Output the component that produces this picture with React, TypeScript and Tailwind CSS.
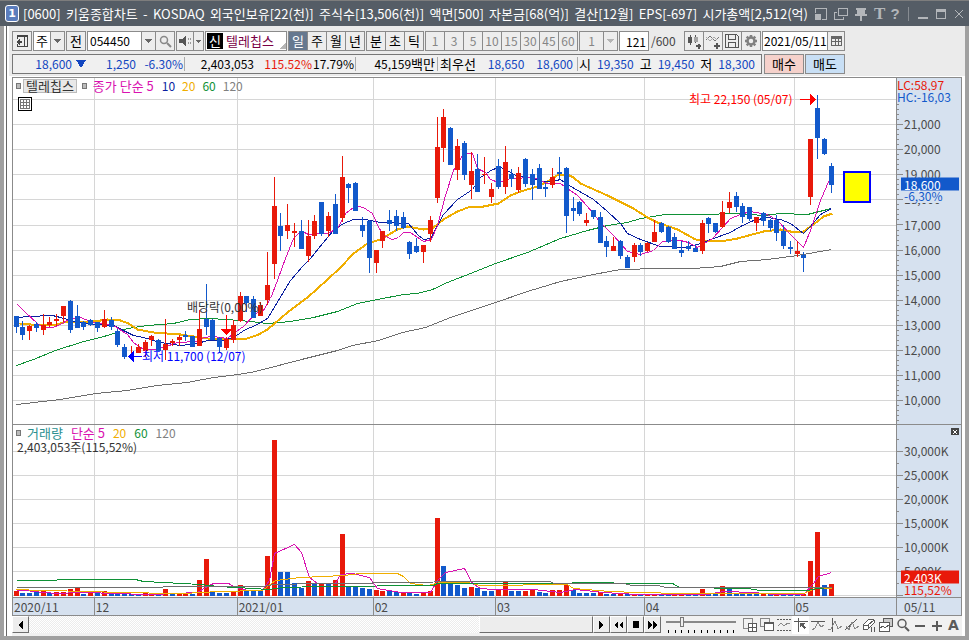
import type { ReactNode } from 'react';

// [high, bodyTop, bodyBottom, low, isUp] in chart rows
const candles: number[][] = [
  [238, 238, 249, 255, 0], [243, 249, 257, 262, 0], [247, 248, 253, 262, 1], [244, 246, 250, 254, 0],
  [236, 247, 252, 257, 1], [239, 244, 247, 249, 1], [236, 241, 243, 248, 1], [228, 228, 238, 244, 1],
  [222, 223, 252, 255, 0], [227, 238, 250, 250, 0], [243, 244, 249, 252, 0], [241, 242, 247, 248, 0],
  [244, 244, 250, 254, 0], [232, 241, 249, 250, 1], [239, 242, 249, 252, 0], [251, 253, 267, 269, 0],
  [266, 269, 279, 281, 0], [268, 277, 278, 282, 1], [266, 269, 275, 275, 1], [262, 264, 273, 279, 1],
  [257, 258, 262, 268, 1], [261, 262, 273, 273, 0], [241, 266, 272, 282, 1], [261, 263, 265, 268, 1],
  [257, 259, 262, 268, 1], [253, 257, 259, 263, 0], [258, 258, 269, 269, 0], [232, 251, 268, 268, 1],
  [206, 241, 249, 257, 0], [241, 242, 262, 262, 0], [259, 260, 269, 274, 0], [259, 261, 270, 272, 1],
  [242, 247, 262, 265, 1], [214, 218, 243, 244, 1], [218, 218, 225, 234, 0], [218, 221, 240, 240, 0],
  [224, 227, 238, 238, 1], [174, 207, 222, 227, 1], [99, 128, 186, 201, 1], [135, 148, 158, 173, 0],
  [126, 147, 153, 161, 1], [145, 153, 155, 169, 1], [142, 153, 171, 171, 0], [142, 158, 178, 184, 1],
  [137, 143, 158, 161, 1], [124, 124, 156, 158, 0], [134, 138, 153, 159, 1], [116, 126, 156, 156, 0],
  [78, 99, 140, 144, 1], [105, 106, 110, 125, 0], [104, 105, 133, 133, 0], [139, 147, 153, 159, 0],
  [142, 143, 180, 195, 0], [172, 172, 185, 195, 1], [153, 153, 163, 170, 1], [132, 142, 146, 153, 0],
  [132, 138, 148, 153, 0], [134, 139, 150, 151, 0], [163, 164, 176, 181, 0], [160, 168, 174, 175, 0],
  [167, 167, 174, 185, 1], [138, 142, 156, 164, 1], [39, 69, 120, 125, 1], [31, 39, 70, 84, 1],
  [49, 50, 87, 87, 0], [61, 68, 92, 102, 1], [63, 65, 97, 102, 0], [74, 93, 107, 121, 1],
  [76, 91, 114, 114, 0], [79, 96, 97, 106, 1], [105, 111, 119, 125, 1], [81, 88, 109, 111, 0],
  [68, 84, 109, 116, 1], [91, 96, 101, 109, 0], [89, 95, 112, 115, 1], [80, 81, 106, 109, 0],
  [91, 96, 107, 122, 0], [86, 90, 111, 111, 0], [105, 109, 111, 119, 0], [90, 99, 107, 110, 1],
  [79, 94, 96, 101, 0], [89, 90, 138, 155, 0], [119, 130, 133, 143, 0], [123, 124, 136, 138, 0],
  [135, 142, 145, 148, 1], [132, 132, 139, 141, 0], [134, 139, 165, 165, 0], [158, 163, 169, 179, 0],
  [159, 168, 173, 173, 1], [162, 163, 178, 181, 0], [177, 179, 190, 190, 0], [165, 167, 179, 184, 1],
  [165, 167, 174, 178, 0], [164, 165, 173, 174, 1], [142, 154, 164, 164, 1], [144, 145, 154, 155, 0],
  [148, 149, 164, 165, 0], [155, 159, 171, 171, 0], [163, 172, 175, 179, 0], [163, 168, 171, 173, 0],
  [166, 170, 174, 174, 0], [142, 145, 173, 176, 1], [139, 140, 146, 155, 0], [145, 145, 154, 155, 0],
  [123, 134, 149, 150, 1], [114, 124, 130, 135, 1], [114, 118, 129, 134, 0], [125, 128, 139, 145, 0],
  [129, 129, 141, 143, 0], [139, 139, 145, 153, 1], [134, 135, 143, 148, 0], [141, 142, 150, 153, 0],
  [137, 142, 155, 163, 0], [147, 153, 168, 171, 0], [163, 169, 171, 176, 0], [163, 173, 176, 179, 1],
  [174, 177, 180, 194, 0], [61, 61, 119, 127, 1], [17, 30, 60, 81, 0], [60, 61, 76, 77, 0],
  [85, 88, 107, 115, 0],
];

// bar heights, negative = volume down from the day before
const volumes = [
  5, -3, -3, -4, 5, -3, 4, 4, 7, 8, -2, 3, -3, 5, -3, -3, -2, -2, -2, 3, 2, -2, 7, -2, 2, 2, -2, 16, 37, -4,
  -3, -3, 4, 11, -5, -5, -5, 40, 156, -24, -24, -13, -8, 15, -13, 12, -12, 16, 62, -10, -9, -8, -7, 6, 5, -5,
  -4, 4, -4, -2, 3, 5, 78, -30, -12, -11, -8, 9, -8, -5, -5, 6, 14, -5, -5, 5, 6, -4, -3, 6, 6, 11, -6, -3,
  -3, -3, 4, -2, -2, 2, -2, 2, -1, 2, 2, -2, -2, 2, 2, -1, -2, 7, -2, -2, 10, -7, -2, -2, -2, -2, 2, -2, 2,
  -2, -2, -1, 2, 35, 64, -11, 12,
];

const priceLines = [
  { color: '#6e6e6e', width: 1, points: '3,326 47,321 82,315 114,312 144,307 174,304 200,299 225,296 242,293 292,280 324,272 339,267 365,262 389,254 412,249 437,239 482,224 514,213 547,203 580,196 607,191 647,190 680,190 707,188 727,183 754,181 784,177 818,171' },
  { color: '#0f9136', width: 1, points: '3,287 20,281 42,272 67,264 94,257 114,250 134,247 160,245 177,241 195,240 214,241 237,243 254,245 277,243 300,239 324,233 344,225 364,221 390,216 404,215 419,211 434,204 457,195 482,185 514,174 547,160 574,152 594,147 614,144 627,140 652,136 687,136 724,135 750,137 767,135 794,136 818,130' },
  { color: '#f0ae00', width: 2, points: '6,245 17,246 40,247 54,243 80,243 94,241 107,242 115,245 124,251 140,254 167,256 194,260 214,261 234,260 245,256 254,251 274,234 294,219 314,201 327,189 340,175 354,165 367,161 384,151 394,148 410,151 420,149 430,141 444,133 457,128 470,128 485,125 497,117 507,113 524,108 534,103 545,96 554,96 560,99 567,105 594,117 620,130 634,139 644,144 664,151 682,161 690,162 707,163 724,160 750,153 767,151 777,153 790,153 804,143 810,138 819,135' },
  { color: '#0a1fa0', width: 1, points: '4,239 15,238 39,237 47,239 64,244 80,246 100,247 114,254 120,257 130,259 147,264 167,267 184,265 194,262 210,262 220,259 232,251 242,247 254,240 265,222 277,202 289,188 297,180 309,165 320,152 330,145 340,141 352,141 367,144 395,145 404,156 410,161 417,160 425,145 430,136 444,121 459,111 467,99 479,91 487,89 494,92 504,98 517,99 527,103 539,103 547,101 554,106 580,121 594,133 607,145 614,155 627,161 647,168 670,169 684,166 700,160 717,154 727,148 740,142 754,139 767,141 777,145 790,155 797,148 807,136 818,130' },
  { color: '#d912b0', width: 1, points: '4,226 12,234 24,245 30,249 39,249 47,246 57,240 67,239 80,244 100,247 114,256 120,264 130,271 140,271 150,269 164,264 184,263 190,259 200,258 214,260 220,255 230,248 242,235 250,232 257,220 264,202 272,180 280,160 285,155 289,153 295,156 305,155 314,155 324,150 332,135 340,129 345,128 350,129 359,135 365,149 372,158 379,161 385,159 390,154 397,154 410,163 418,161 424,147 428,132 432,117 440,92 450,75 459,75 464,90 472,94 477,101 485,104 497,100 520,99 534,105 547,105 554,110 564,117 574,128 587,144 600,157 614,173 627,176 640,172 649,163 667,162 675,164 684,169 699,160 710,148 717,140 727,136 737,133 754,136 764,142 777,156 790,169 797,152 807,122 816,101' },
];

const volumeLines = [
  { color: '#d912b0', points: '3,165 12,165 20,166 30,167 45,168 65,167 80,167 95,168 140,169 184,167 194,161 200,158 215,158 222,162 235,165 249,165 256,155 261,128 270,124 281,119 288,127 296,152 304,158 322,158 327,149 339,148 356,152 364,163 387,167 417,167 424,155 432,147 451,143 459,158 467,163 480,164 520,164 547,167 562,164 590,167 624,169 694,169 710,166 740,167 760,169 790,169 800,158 805,151 818,147' },
  { color: '#f0ae00', points: '3,164 27,165 80,166 100,167 170,168 205,166 249,165 262,155 287,152 310,151 330,150 347,148 384,148 390,151 397,158 414,160 427,157 454,157 467,160 554,159 560,163 597,166 624,167 670,168 790,168 802,163 818,163' },
  { color: '#0f9136', points: '3,155 40,155 47,154 122,154 130,156 150,157 187,159 205,161 240,163 255,164 270,162 307,161 420,160 424,158 540,158 577,157 597,157 604,158 659,158 666,162 734,163 747,165 794,165 804,163 818,162' },
  { color: '#6e6e6e', points: '3,162 149,162 150,161 250,161 260,159 307,158 358,158 360,157 482,156 537,156 540,158 610,158 619,160 645,160 652,162 818,162' },
];

const PLOT_W = 883;
const PRICE_H = 346;
const VOLUME_H = 172;
const UP = '#e8190a';
const DOWN = '#1259cb';

const monthLines = [81, 224, 360, 482, 631, 781];
const priceRows = Array.from({ length: 13 }, (_, k) => 21 + Math.round(k * 25.1));
const volumeRows = [26, 50, 74, 98, 122, 146, 170];
const candleX = (i: number) => 3 + Math.floor(i * 6.793);
const pct = (value: number, total: number) => `${(value / total) * 100}%`;

const months = [
  { label: '2020/11', grow: 'grow-[81]' },
  { label: '12', grow: 'grow-[143]' },
  { label: '2021/01', grow: 'grow-[136]' },
  { label: '02', grow: 'grow-[122]' },
  { label: '03', grow: 'grow-[149]' },
  { label: '04', grow: 'grow-[150]' },
  { label: '05', grow: 'grow-[102]' },
];

const titleParts = [
  '[0600]', '키움종합차트', '-', 'KOSDAQ', '외국인보유[22(천)]', '주식수[13,506(천)]', '액면[500]',
  '자본금[68(억)]', '결산[12월]', 'EPS[-697]', '시가총액[2,512(억)',
];

const btn = 'flex h-5 shrink-0 items-center justify-center border border-[#8b8b8b] bg-[#ededed]';
const group = 'flex h-5 shrink-0 divide-x divide-[#8b8b8b] border border-[#8b8b8b] bg-[#ededed]';
const cell = 'flex h-full flex-1 items-center justify-center';

function Icon({ w = 14, h = 14, className = '', children }: { w?: number; h?: number; className?: string; children: ReactNode }) {
  return (
    <svg width={w} height={h} viewBox={`0 0 ${w} ${h}`} fill="none" stroke="currentColor" className={`shrink-0 ${className}`} shapeRendering="crispEdges" aria-hidden="true">
      {children}
    </svg>
  );
}

function Arrow({ className = 'text-[#666]' }: { className?: string }) {
  return (
    <Icon w={7} h={4} className={className}>
      <path d="M0 0h7L3.500 4z" fill="currentColor" stroke="none" />
    </Icon>
  );
}

function TitleBar() {
  return (
    <header className="flex h-[26px] shrink-0 items-center border-t border-[#7d7d7d] bg-[#555d66] pr-1 pl-[5px] text-[#b3b6ba]">
      <span className="mr-1 flex h-[17px] w-[14px] shrink-0 items-center justify-center rounded-[3px] border border-white bg-[#5b7dbd] font-['DejaVu_Sans',sans-serif] text-[11px] font-bold text-white">1</span>
      <h1 className="flex min-w-0 flex-1 justify-between whitespace-nowrap text-white">
        {titleParts.map((part) => <span key={part}>{part}</span>)}
      </h1>
      <div className="flex shrink-0 items-center gap-[6px] pl-[6px]">
        <button aria-label="화면 축소">
          <Icon>
            <path d="M1.500 6V1.500h11v11H8" />
            <path d="M1 7h6v6H1z" fill="currentColor" stroke="none" />
          </Icon>
        </button>
        <button aria-label="화면 복사">
          <Icon>
            <path d="M4.500 1.500h9v7h-9z" />
            <path d="M3 5.500H.500v7h9V10" />
          </Icon>
        </button>
        <button aria-label="고정">
          <Icon>
            <path d="M2 1h10v2h-1v4h2v2H1V7h2V3H2zM6 9h2v5H6z" fill="currentColor" stroke="none" />
          </Icon>
        </button>
        <button aria-label="글꼴" className="w-[10px] font-['Liberation_Serif',serif] text-[17px] leading-5 font-bold">T</button>
        <button aria-label="도움말" className="w-[10px] font-['Liberation_Sans',sans-serif] text-[15px] leading-5 font-bold">?</button>
        <span className="mx-[2px] h-[14px] w-px bg-[#878c92]" />
        <button aria-label="최소화">
          <Icon w={12}><path d="M1 11h10" strokeWidth="2" /></Icon>
        </button>
        <button aria-label="최대화">
          <Icon w={12}><path d="M1.500 3v8.500h9V3" /><path d="M1 3h10" strokeWidth="3" /></Icon>
        </button>
        <button aria-label="닫기">
          <Icon w={12}><path d="M2 3l8 8M10 3l-8 8" shapeRendering="auto" /></Icon>
        </button>
      </div>
    </header>
  );
}

function Toolbar() {
  return (
    <div className="flex h-5 items-center gap-px text-black">
      <button className={`${btn} w-5`} aria-label="종목 목록">
        <Icon w={12} h={12} className="text-[#444]">
          <path d="M1.500 4V.500h10v11h-10V9M8.500 0v12" />
          <path d="M1 0h11v2H1zM0 7l4-4v8zM4 6h2v2H4z" fill="currentColor" stroke="none" />
        </Icon>
      </button>
      <button className={`${btn} w-8 !bg-white`} aria-label="시장 구분">
        <span className="flex-1">주</span>
        <span className="flex h-full w-[14px] items-center justify-center border-l border-[#8b8b8b] bg-[#ededed]"><Arrow /></span>
      </button>
      <button className={`${btn} w-5`}>전</button>
      <div className="flex h-5 w-[88px] shrink-0 border border-[#8b8b8b] bg-white">
        <input aria-label="종목코드" defaultValue="054450" className="min-w-0 flex-1 pl-[2px] text-[12px] outline-none" />
        <button className="flex w-[14px] items-center justify-center border-l border-[#8b8b8b] bg-[#ededed]" aria-label="종목 펼치기"><Arrow /></button>
        <button className="flex w-[19px] items-center justify-center border-l border-[#8b8b8b] bg-[#ededed] text-[#888]" aria-label="종목 검색">
          <Icon w={13} h={13}>
            <circle cx="5" cy="5" r="3.500" strokeWidth="1.500" shapeRendering="auto" />
            <path d="M8 8l4 4" strokeWidth="2" shapeRendering="auto" />
          </Icon>
        </button>
      </div>
      <div className="flex h-5 w-7 shrink-0 border border-[#8b8b8b] bg-[#ededed]">
        <button className="flex flex-1 items-center justify-center" aria-label="음성">
          <Icon w={13} h={12} className="text-[#555]">
            <path d="M0 4h3l4-4v12L3 8H0z" fill="currentColor" stroke="none" />
            <path d="M9.500 3v2M9.500 7v2M11.500 3v2M11.500 7v2" stroke="#999" />
          </Icon>
        </button>
        <button className="flex w-[10px] items-center justify-center border-l border-[#8b8b8b]" aria-label="음성 설정"><Icon w={5} h={3} className="text-[#666]"><path d="M0 0h5L2.500 3z" fill="currentColor" stroke="none" /></Icon></button>
      </div>
      <div className="relative flex h-5 w-[82px] shrink-0 items-center border border-[#8b8b8b] bg-white text-[#7a0046]">
        <span className="mx-px flex h-4 w-4 items-center justify-center bg-black text-white">신</span>
        <span className="pl-[2px]">텔레칩스</span>
        <Icon w={7} h={7} className="absolute right-0 bottom-[1px] text-[#b5b5b5]"><path d="M7 0v7H0z" fill="currentColor" stroke="none" /></Icon>
      </div>
      <div className={`${group} w-[77px]`}>
        <button className={`${cell} bg-[#66788f] text-white`}>일</button>
        <button className={cell}>주</button>
        <button className={cell}>월</button>
        <button className={cell}>년</button>
      </div>
      <div className={`${group} w-[58px]`}>
        <button className={cell}>분</button>
        <button className={cell}>초</button>
        <button className={cell}>틱</button>
      </div>
      <div className={`${group} w-[153px] text-[12px] text-[#858585]`}>
        {['1', '3', '5', '10', '15', '30', '45', '60'].map((n) => (
          <button key={n} className={cell}>{n}</button>
        ))}
      </div>
      <button className={`${btn} w-[39px] text-[12px] text-[#858585]`} aria-label="주기 선택">
        <span className="flex-1">1</span>
        <span className="flex h-full w-[14px] items-center justify-center border-l border-[#8b8b8b]"><Arrow className="text-[#b5b5b5]" /></span>
      </button>
      <label className="flex w-16 shrink-0 items-center text-[12px]">
        <input aria-label="조회 개수" defaultValue="121" className="h-5 w-[30px] border border-[#8b8b8b] bg-white pr-[2px] text-right outline-none" />
        <span className="pl-[2px] text-[#444]">/600</span>
      </label>
      <div className={`${group} w-[77px] text-[#555]`}>
        <button className={cell} aria-label="차트 추가">
          <Icon w={15} h={15}>
            <path d="M1 3h4v6H1z" fill="currentColor" stroke="none" />
            <path d="M3 1v10M8.500 1v8" />
            <path d="M7 3h4v5H7z" fill="#a5a5a5" stroke="none" />
            <path d="M9 12h5M11.500 9.500v5" strokeWidth="2" />
          </Icon>
        </button>
        <button className={cell} aria-label="지표 추가">
          <Icon w={15} h={15}>
            <path d="M0 6l4-4 5 5 4-4" stroke="#777" />
            <path d="M0 3l4 4 4-4 3 3" stroke="#aaa" />
            <path d="M8 12h6M11 9v6" strokeWidth="2" />
          </Icon>
        </button>
        <button className={cell} aria-label="저장">
          <Icon>
            <path d="M.500.500h11l2 2v11H.500z" />
            <path d="M3.500 1v4h7V1M3.500 13V8.500h7V13" />
          </Icon>
        </button>
        <button className={cell} aria-label="설정">
          <Icon className="text-[#808080]">
            <g shapeRendering="auto">
              <circle cx="7" cy="7" r="3.500" strokeWidth="2.500" />
              <path d="M7 1v2M7 11v2M1 7h2M11 7h2M2.700 2.700l1.500 1.500M9.800 9.800l1.500 1.500M11.300 2.700L9.800 4.200M4.200 9.800l-1.500 1.500" strokeWidth="2.500" />
            </g>
          </Icon>
        </button>
      </div>
      <div className="flex h-5 w-[83px] shrink-0 border border-[#8b8b8b] bg-white">
        <input aria-label="조회 날짜" defaultValue="2021/05/11" className="min-w-0 flex-1 pl-px text-[12px] outline-none" />
        <button className="flex w-[17px] items-center justify-center border-l border-[#8b8b8b] bg-[#ededed] text-[#666]" aria-label="달력">
          <Icon w={11} h={10}>
            <path d="M.500.500h10v9H.500zM.500 5.500h10M4 3v7M7.500 3v7" />
            <path d="M0 1.500h11" strokeWidth="3" />
          </Icon>
        </button>
      </div>
    </div>
  );
}

function QuoteBar() {
  return (
    <div className="flex h-5 gap-[2px] text-[#1246c0]">
      <div className="flex h-5 w-[750px] shrink-0 items-center divide-x divide-[#aaa] border border-[#777] bg-[#f0f0f0] text-right text-[12px]">
        <div className="flex w-[172px] items-center justify-end">
          <span>18,600</span>
          <Icon w={10} h={8} className="mr-[2px] ml-1"><path d="M0 0h10L5 8z" fill="currentColor" stroke="none" /></Icon>
          <span className="w-12">1,250</span>
          <span className="w-12 pr-px">-6.30%</span>
        </div>
        <div className="flex w-[171px] justify-end text-black">
          <span>2,403,053</span>
          <span className="w-[58px] text-[#e8190a]">115.52%</span>
          <span className="w-[43px] pr-px">17.79%</span>
        </div>
        <div className="w-[82px] pr-[2px] text-black">45,159<span className="text-[13px]">백만</span></div>
        <div className="flex w-[140px] items-center justify-between pr-1 pl-[2px]">
          <span className="text-[13px] text-black">최우선</span>
          <span>18,650</span>
          <span>18,600</span>
        </div>
        <div className="flex flex-1 items-center justify-between pr-[6px] pl-px">
          <span className="text-[13px] text-black">시</span>
          <span>19,350</span>
          <span className="text-[13px] text-black">고</span>
          <span>19,450</span>
          <span className="text-[13px] text-black">저</span>
          <span>18,300</span>
        </div>
      </div>
      <div className="flex gap-px text-black">
        <button className="h-5 w-10 border border-[#8b8b8b] bg-[#f5d1cb]">매수</button>
        <button className="h-5 w-10 border border-[#8b8b8b] bg-[#c8dff5]">매도</button>
      </div>
    </div>
  );
}

function Marker() {
  return <span className="h-[6px] w-[5px] shrink-0 border border-[#777] bg-[#bbb]" />;
}

function PricePlot() {
  return (
    <div className="relative min-w-0 flex-1 text-[12px]">
      <svg viewBox={`0 0 ${PLOT_W} ${PRICE_H}`} preserveAspectRatio="none" className="absolute inset-0 h-full w-full" shapeRendering="crispEdges" role="img" aria-label="텔레칩스 일봉 차트">
        {priceRows.map((y) => <rect key={y} x={0} y={y} width={PLOT_W} height={1} fill="#d6d6d6" />)}
        {monthLines.map((x) => <rect key={x} x={x} y={0} width={1} height={PRICE_H} fill="#d6d6d6" />)}
        {priceLines.map((l) => (
          <polyline key={l.color} points={l.points} fill="none" stroke={l.color} strokeWidth={l.width} transform="translate(.5 .5)" />
        ))}
        {candles.map(([high, top, bottom, low, up], i) => (
          <g key={i} fill={up ? UP : DOWN}>
            <rect x={candleX(i)} y={high} width={1} height={low - high} />
            <rect x={candleX(i) - 2} y={top} width={5} height={bottom - top} />
          </g>
        ))}
        {/* high / low / dividend markers */}
        <path d="M787 21h10v-5l6 5.500-6 5.500v-5h-10z" fill="#f00" />
        <path d="M129 278h-8v-5l-6 5.500 6 5.500v-5h8z" fill="#00f" />
        <path d="M213 237h1v14h5l-5.500 6-5.500-6h5z" fill="#f00" />
        <rect x={831} y={94} width={26} height={30} fill="#ff0" stroke="#00f" strokeWidth={2} />
      </svg>
      <div className="absolute top-[1px] left-[3px] flex items-center gap-[2px] text-[13px] whitespace-nowrap">
        <Marker />
        <button className="h-[14px] border border-[#bbb] bg-[#e8e8e8] px-[2px] leading-[12px] text-[#333]">텔레칩스</button>
        <span className="w-px" />
        <Marker />
        <span className="pl-1 text-[#d912b0]">종가 단순 5</span>
        <span className="pl-[6px] text-[12px] text-[#0a1fa0]">10</span>
        <span className="pl-[5px] text-[12px] text-[#f0ae00]">20</span>
        <span className="pl-[5px] text-[12px] text-[#0f9136]">60</span>
        <span className="pl-[5px] text-[12px] text-[#808080]">120</span>
      </div>
      <button className="absolute top-[19px] left-[5px] flex h-[14px] w-[14px] items-center justify-center border border-black bg-white text-[#777]" aria-label="데이터 표">
        <Icon w={10} h={10}><path d="M.500.500h9v9h-9zM0 3.500h10M0 6.500h10M3.500 0v10M6.500 0v10" /></Icon>
      </button>
      <span className="absolute -translate-y-1/2 whitespace-nowrap text-[#f00]" style={{ left: pct(676, PLOT_W), top: pct(21, PRICE_H) }}>최고 22,150 (05/07)</span>
      <span className="absolute -translate-y-1/2 whitespace-nowrap text-[#333]" style={{ left: pct(174, PLOT_W), top: pct(229, PRICE_H) }}>배당락(0,00%)</span>
      <span className="absolute -translate-y-1/2 whitespace-nowrap text-[#00f]" style={{ left: pct(129, PLOT_W), top: pct(278, PRICE_H) }}>최저 11,700 (12/07)</span>
    </div>
  );
}

function PriceAxis() {
  const ticks = Array.from({ length: 65 }, (_, k) => 21 + Math.round(k * 5.02));
  return (
    <div className="relative w-[66px] shrink-0 border-x border-[#8b8b8b] bg-[#d6e1ef] text-[12px] text-[#4a4a4a]">
      <svg viewBox={`0 0 6 ${PRICE_H}`} preserveAspectRatio="none" className="absolute top-0 left-0 h-full w-[6px]" shapeRendering="crispEdges" aria-hidden="true">
        {ticks.map((y, k) => <rect key={y} x={0} y={y} width={k % 5 ? 2 : 6} height={1} fill="#8b8b8b" />)}
      </svg>
      {priceRows.slice(1).map((y, k) => (
        <span key={y} className="absolute left-[7px] -translate-y-1/2" style={{ top: pct(y, PRICE_H) }}>{21 - k},000</span>
      ))}
      <span className="absolute top-0 left-0 bg-[#d6e1ef] leading-[13px] text-[#e8190a]">LC:58,97</span>
      <span className="absolute top-[13px] left-0 bg-[#d6e1ef] leading-[12px] text-[#1259cb]">HC:-16,03</span>
      <span className="absolute left-[7px] -translate-y-1/2 bg-[#d6e1ef] leading-[14px] text-[#1259cb]" style={{ top: pct(118, PRICE_H) }}>-6,30%</span>
      <div className="absolute right-[2px] left-1 -translate-y-1/2 bg-[#1259cb] pl-[3px] leading-[13px] text-white" style={{ top: pct(106, PRICE_H) }}>18,600</div>
    </div>
  );
}

function VolumePlot() {
  return (
    <div className="relative min-w-0 flex-1">
      <svg viewBox={`0 0 ${PLOT_W} ${VOLUME_H}`} preserveAspectRatio="none" className="absolute inset-0 h-full w-full" shapeRendering="crispEdges" role="img" aria-label="거래량 차트">
        {volumeRows.map((y) => <rect key={y} x={0} y={y} width={PLOT_W} height={1} fill="#d6d6d6" />)}
        {monthLines.map((x) => <rect key={x} x={x} y={0} width={1} height={VOLUME_H} fill="#d6d6d6" />)}
        {volumes.map((v, i) => (
          <rect key={i} x={candleX(i) - 2} y={171 - Math.abs(v)} width={5} height={Math.abs(v)} fill={v > 0 ? UP : DOWN} />
        ))}
        {volumeLines.map((l) => (
          <polyline key={l.color} points={l.points} fill="none" stroke={l.color} transform="translate(.5 .5)" />
        ))}
      </svg>
      <div className="absolute top-[1px] left-[3px] whitespace-nowrap">
        <div className="flex items-center gap-2">
          <Marker />
          <span className="-ml-[2px] text-[#2a9090]">거래량</span>
          <span className="text-[#d912b0]">단순 5</span>
          <span className="text-[12px] text-[#f0ae00]">20</span>
          <span className="text-[12px] text-[#0f9136]">60</span>
          <span className="text-[12px] text-[#808080]">120</span>
        </div>
        <div className="pl-px text-[12px] text-[#333]">2,403,053주(115,52%)</div>
      </div>
    </div>
  );
}

function VolumeAxis() {
  const ticks = Array.from({ length: 14 }, (_, k) => 14 + k * 12);
  return (
    <div className="relative w-[66px] shrink-0 border-x border-[#8b8b8b] bg-[#d6e1ef] text-[12px] text-[#4a4a4a]">
      <svg viewBox={`0 0 6 ${VOLUME_H}`} preserveAspectRatio="none" className="absolute top-0 left-0 h-full w-[6px]" shapeRendering="crispEdges" aria-hidden="true">
        {ticks.map((y, k) => <rect key={y} x={0} y={y} width={k % 2 ? 6 : 2} height={1} fill="#8b8b8b" />)}
      </svg>
      {['30,000K', '25,000K', '20,000K', '15,000K', '10,000K', '5,000K'].map((label, k) => (
        <span key={label} className="absolute left-[7px] -translate-y-1/2" style={{ top: pct(volumeRows[k], VOLUME_H) }}>{label}</span>
      ))}
      <button className="absolute top-[3px] right-[2px] flex h-[7px] w-2 items-center justify-center bg-[#444] text-white" aria-label="거래량 닫기">
        <Icon w={4} h={4}><path d="M0 0l4 4M4 0L0 4" /></Icon>
      </button>
      <div className="absolute right-[2px] left-1 -translate-y-1/2 bg-[#e8190a] pl-[3px] leading-[13px] text-white" style={{ top: pct(152, VOLUME_H) }}>2,403K</div>
      <span className="absolute left-[7px] -translate-y-1/2 leading-[13px] text-[#e8190a]" style={{ top: pct(164, VOLUME_H) }}>115,52%</span>
    </div>
  );
}

const raised = 'flex h-[17px] w-[17px] shrink-0 items-center justify-center border border-t-white border-l-white border-r-[#6e6e6e] border-b-[#6e6e6e] bg-[#ededed] text-black';

const tools: { label: string; draw: ReactNode }[] = [
  { label: '새 차트', draw: <><path d="M.500.500h9v10h-9z" stroke="#888" /><path d="M5 5h9v9H5z" fill="#fff" stroke="none" /><path d="M5.500 5.500h8v8h-8zM5 9.500h9M9.500 5v9" /></> },
  { label: '겹쳐 보기', draw: <><path d="M.500.500h9v8h-9z" stroke="#888" /><path d="M4.500 4.500h9v8h-9z" fill="#fff" /><path d="M5 5.500h8" /></> },
  { label: '영역', draw: <><path d="M0 1.500h14M0 12.500h14" strokeDasharray="2 1" /><path d="M1 8l3-3 3 3 4-3 2 1" stroke="#888" /></> },
  { label: '십자선', draw: <><path d="M0 3.500h14M4.500 0v14" /><path d="M6 5h6L9 7l3 3-2 1-3-3-1 2z" fill="currentColor" stroke="none" /></> },
  { label: '수평선', draw: <><path d="M0 3.500h14" /><path d="M1 12l3-2 3-6 3 5 3-2" stroke="#888" /></> },
  { label: '수직선', draw: <><path d="M4.500 0v14" /><path d="M0 11h3l4-8 3 8 4-3" stroke="#888" /></> },
  { label: '추세선', draw: <><path d="M0 12L12 1" /><path d="M1 8l3 4 3-8 3 7 4-3" stroke="#888" /></> },
  { label: '지우개', draw: <><path d="M1 7l6-6 5 1v3l-6 6H1z" fill="#fff" /><path d="M1 7h5l6-5M6 7v4M9.500 9v5M12.500 9v5" /></> },
  { label: '차트 묶음', draw: <><path d="M4.500.500h9v8h-9z" fill="#ccc" /><path d="M.500 4.500h10v9H.500z" fill="#fff" /><path d="M1 10l3-2 2 2 4-3" /></> },
  { label: '확대경', draw: <g shapeRendering="auto"><circle cx="6" cy="5.500" r="4" strokeWidth="1.500" /><path d="M9 9l4 4" strokeWidth="2" /></g> },
  { label: '축소', draw: <path d="M2 8h10" strokeWidth="2" /> },
  { label: '확대', draw: <path d="M2 8h10M7 3v10" strokeWidth="2" /> },
];

function BottomBar() {
  return (
    <div className="flex h-5 shrink-0 items-start bg-[#f1f1f1]">
      <button className={raised} aria-label="이전">
        <Icon w={5} h={8}><path d="M5 0v8L0 4z" fill="currentColor" stroke="none" /></Icon>
      </button>
      <div className="flex h-[17px] min-w-0 flex-1 justify-end bg-[repeating-conic-gradient(#fff_0_25%,#ececec_0_50%)] bg-[length:2px_2px]">
        <div className="h-full w-[114px] border border-t-white border-l-white border-r-[#6e6e6e] border-b-[#6e6e6e] bg-[#ededed]" />
      </div>
      <button className={raised} aria-label="다음">
        <Icon w={5} h={8}><path d="M0 0v8l5-4z" fill="currentColor" stroke="none" /></Icon>
      </button>
      <button className={raised} aria-label="처음으로">
        <Icon w={9} h={8}><path d="M4 0v8L0 4zM9 0v8L5 4z" fill="currentColor" stroke="none" /></Icon>
      </button>
      <button className={raised} aria-label="정지"><span className="h-[7px] w-[6px] bg-black" /></button>
      <button className={raised} aria-label="끝으로">
        <Icon w={9} h={8}><path d="M0 0v8l4-4zM5 0v8l4-4z" fill="currentColor" stroke="none" /></Icon>
      </button>
      <div className="ml-[5px] w-[70px] shrink-0">
        <input
          type="range"
          aria-label="차트 간격"
          defaultValue={21}
          className="block h-[11px] w-full appearance-none bg-[linear-gradient(#888,#888)] bg-[length:100%_2px] bg-center bg-no-repeat [&::-webkit-slider-thumb]:h-[10px] [&::-webkit-slider-thumb]:w-1 [&::-webkit-slider-thumb]:appearance-none [&::-webkit-slider-thumb]:border [&::-webkit-slider-thumb]:border-[#777] [&::-webkit-slider-thumb]:bg-[#eee]"
        />
        <div className="flex justify-between px-[2px] pt-[3px]">
          {Array.from({ length: 11 }, (_, i) => <span key={i} className="h-[3px] w-px bg-black" />)}
        </div>
      </div>
      <div className="ml-[5px] flex shrink-0 text-[#5a5a5a]">
        {tools.map((t) => (
          <button key={t.label} aria-label={t.label} className={`flex h-[18px] w-[17px] items-center justify-center ${t.label === '십자선' ? 'bg-white' : ''}`}>
            <Icon>{t.draw}</Icon>
          </button>
        ))}
        <button aria-label="글자" className="h-[18px] w-[17px] font-['DejaVu_Sans',sans-serif] text-[14px] leading-[18px] font-bold">A</button>
      </div>
    </div>
  );
}

export default function App() {
  return (
    <div className="flex h-screen min-h-[400px] flex-col bg-[#a0a0a0] font-['Noto_Sans_CJK_KR',sans-serif] text-[13px] leading-[14px]">
      <TitleBar />
      <main className="flex min-h-0 flex-1 flex-col border-r-4 border-b-4 border-l-4 border-[#a0a0a0] bg-white pl-[2px]">
        <div className="flex min-h-0 flex-1 flex-col border-l border-[#666]">
          <div className="mb-px ml-[2px] flex shrink-0 flex-col gap-[3px] bg-[#ebebeb] pt-[5px] pb-[2px] pl-[3px]">
            <Toolbar />
            <QuoteBar />
          </div>
          <div className="mr-[3px] ml-[5px] flex min-h-0 flex-1 flex-col">
            <section className="flex min-h-0 grow-[346] basis-0 border-t border-l border-[#8b8b8b]">
              <PricePlot />
              <PriceAxis />
            </section>
            <section className="flex min-h-0 grow-[172] basis-0 border-t border-l border-[#8b8b8b]">
              <VolumePlot />
              <VolumeAxis />
            </section>
            <div className="flex h-[19px] shrink-0 border border-[#8b8b8b] bg-[#d6e1ef] text-[12px] text-[#4a4a4a]">
              <div className="flex min-w-0 flex-1 divide-x divide-[#8b8b8b]">
                {months.map((m) => (
                  <span key={m.label} className={`basis-0 pl-px leading-[17px] ${m.grow}`}>{m.label}</span>
                ))}
              </div>
              <span className="w-[65px] shrink-0 border-l border-[#8b8b8b] pl-[7px] leading-[17px]">05/11</span>
            </div>
            <BottomBar />
          </div>
        </div>
      </main>
    </div>
  );
}
